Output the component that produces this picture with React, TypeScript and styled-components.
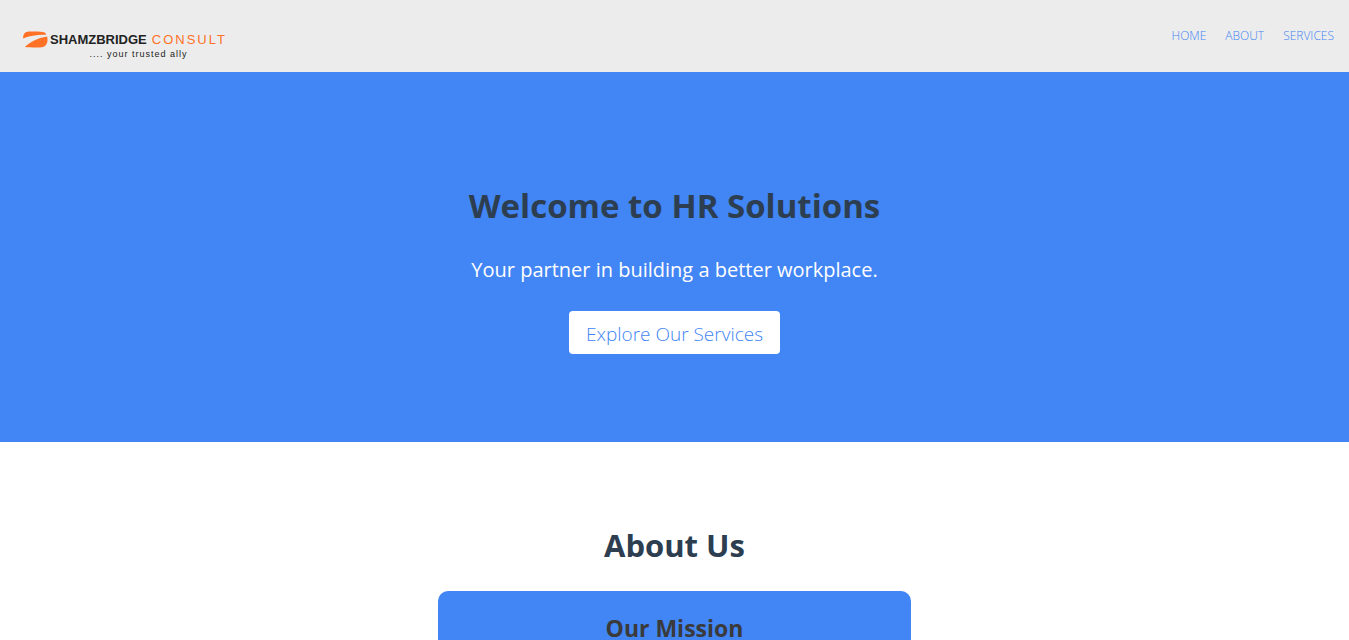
import React from 'react';
import styled, { createGlobalStyle } from 'styled-components';

const GlobalStyle = createGlobalStyle`
  * { box-sizing: border-box; }
  body {
    margin: 0;
    background: #fff;
    color: #343a40;
    font-family: "Segoe UI", "Open Sans", "Noto Sans", sans-serif;
  }
`;

const Header = styled.header`
  display: flex;
  justify-content: space-between;
  align-items: center;
  min-height: 72px;
  padding: 0 15px 0 23px;
  background: #ececec;
`;

const Brand = styled.a`
  display: flex;
  align-items: flex-start;
  padding-top: 18px;
  color: #222;
  text-decoration: none;
  font-family: "Liberation Sans", Arial, sans-serif;
`;

const Mark = styled.svg`
  width: 25px;
  height: 17px;
  margin: 0 2px 0 0;
`;

const BrandText = styled.span`
  display: flex;
  flex-direction: column;
  align-items: center;
`;

const BrandName = styled.span`
  display: flex;
  gap: 5px;
  font-size: 13px;
  line-height: 18px;
`;

const Consult = styled.span`
  color: #ff7226;
  letter-spacing: 2px;
`;

const Tagline = styled.span`
  font-size: 9px;
  line-height: 10px;
  letter-spacing: 1px;
`;

const Nav = styled.nav`
  display: flex;
  gap: 19px;
`;

const NavLink = styled.a`
  color: #4285f4;
  font-size: 12px;
  font-weight: 300;
  line-height: 18px;
  text-decoration: none;
`;

const Hero = styled.section`
  display: flex;
  flex-direction: column;
  align-items: center;
  padding: 110px 20px 88px;
  background: #4285f4;
  text-align: center;
`;

const HeroTitle = styled.h1`
  margin: 0;
  color: #2c3e50;
  font-size: 33px;
  line-height: 48px;
`;

const HeroText = styled.p`
  margin: 23px 0 25px;
  color: #fff;
  font-size: 20px;
  line-height: 33px;
`;

const HeroButton = styled.button`
  padding: 10px 17px 6px;
  border: 0;
  border-radius: 4px;
  background: #fff;
  color: #4285f4;
  font-family: inherit;
  font-size: 19px;
  font-weight: 300;
  line-height: 27px;
  cursor: pointer;
`;

const About = styled.section`
  padding: 79px 0;
  text-align: center;
`;

const AboutTitle = styled.h2`
  margin: 0 0 22px;
  color: #2c3e50;
  font-size: 31px;
  line-height: 48px;
`;

const Card = styled.article`
  width: 35%;
  min-width: 280px;
  margin: 0 auto;
  padding: 20px;
  border-radius: 10px;
  background: #4285f4;
`;

const CardTitle = styled.h3`
  margin: 0;
  color: #3a3a3a;
  font-size: 23px;
  line-height: 34px;
`;

const links = ['Home', 'About', 'Services'];

export default function App() {
  return (
    <>
      <GlobalStyle />
      <Header>
        <Brand href="#home">
          <Mark viewBox="0 0 25 17" aria-hidden="true">
            <path fill="#ff7226" d="M0 7.5C.2 3 2 .8 6 .6C12 .2 18 .3 21 1.2C22.5 1.8 23 2.7 23 3.8C15 3.5 7 4.7 0 7.5Z" />
            <path fill="#ff7226" d="M1.8 16C7 11 14 7 24.2 5.5C25 10 24.5 14 20 16C16 16.8 7 16.5 1.8 16Z" />
          </Mark>
          <BrandText>
            <BrandName>
              <strong>SHAMZBRIDGE</strong>
              <Consult>CONSULT</Consult>
            </BrandName>
            <Tagline>.... your trusted ally</Tagline>
          </BrandText>
        </Brand>
        <Nav aria-label="Main">
          {links.map((name) => (
            <NavLink key={name} href={`#${name.toLowerCase()}`}>{name.toUpperCase()}</NavLink>
          ))}
        </Nav>
      </Header>
      <main>
        <Hero id="home">
          <HeroTitle>Welcome to HR Solutions</HeroTitle>
          <HeroText>Your partner in building a better workplace.</HeroText>
          <HeroButton type="button">Explore Our Services</HeroButton>
        </Hero>
        <About id="about">
          <AboutTitle>About Us</AboutTitle>
          <Card>
            <CardTitle>Our Mission</CardTitle>
          </Card>
        </About>
      </main>
    </>
  );
}
